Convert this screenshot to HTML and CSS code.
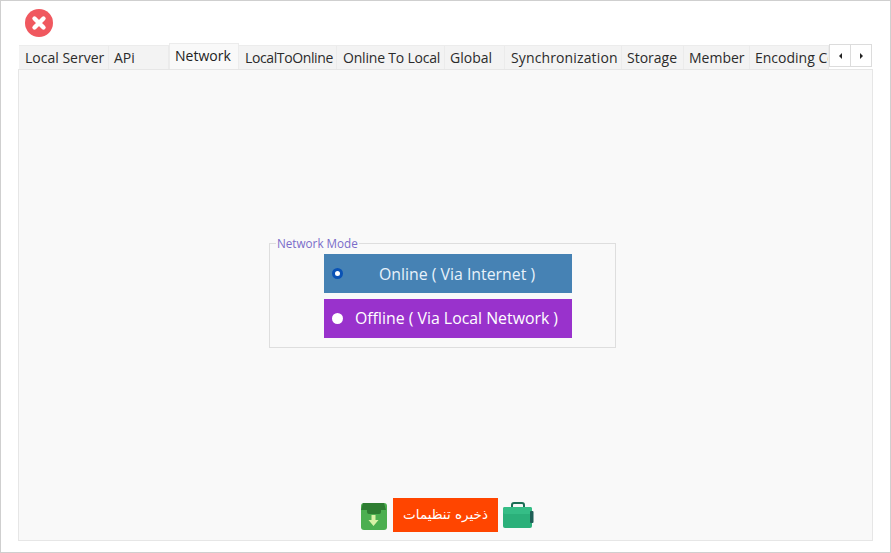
FILE: index.html
```html
<!DOCTYPE html>
<html lang="en">
<head>
<meta charset="utf-8">
<title>Settings</title>
<link rel="stylesheet" href="styles.css">
</head>
<body>
<div class="window">
  <div class="titlebar">
    <svg class="close-icon" width="28" height="28" viewBox="0 0 28 28">
      <circle cx="14" cy="14" r="14" fill="#f0585f"/>
      <path d="M9.500 9.500L18.500 18.500M18.500 9.500L9.500 18.500" stroke="#fff" stroke-width="4.400" stroke-linecap="round"/>
    </svg>
  </div>
  <div class="tabstrip">
    <div class="tab w-server">Local Server</div>
    <div class="tab w-api">APi</div>
    <div class="tab tab-active w-network">Network</div>
    <div class="tab w-l2o">LocalToOnline</div>
    <div class="tab w-o2l">Online To Local</div>
    <div class="tab w-global">Global</div>
    <div class="tab w-sync">Synchronization</div>
    <div class="tab w-storage">Storage</div>
    <div class="tab w-member">Member</div>
    <div class="tab w-encoding">Encoding Config</div>
    <div class="scroller">
      <div class="scroll-btn"><span class="tri tri-left"></span></div>
      <div class="scroll-btn"><span class="tri tri-right"></span></div>
    </div>
  </div>
  <div class="panel">
    <div class="center">
      <fieldset class="group">
        <legend class="group-title">Network Mode</legend>
        <div class="option option-online">
          <span class="radio radio-on"></span>
          <span class="option-label">Online ( Via Internet )</span>
        </div>
        <div class="option option-offline">
          <span class="radio radio-off"></span>
          <span class="option-label">Offline ( Via Local Network )</span>
        </div>
      </fieldset>
    </div>
    <div class="footer">
      <svg class="foot-icon" width="27" height="28" viewBox="0 0 27 28">
        <path d="M1 4q0-3 3-3h20q3 0 3 3v21q0 3-3 3H4q-3 0-3-3z" fill="#4caf50"/>
        <path d="M1 8L3 1h21l2 7h-5v2q0 2-2 2H9q-2 0-2-2V8z" fill="#2e7d32"/>
        <path d="M11.500 13h4v5h3l-5 6-5-6h3z" fill="#d9f2a6"/>
      </svg>
      <div class="save-btn" dir="rtl">ذخیره تنظیمات</div>
      <svg class="foot-icon" width="31" height="26" viewBox="0 0 31 26">
        <path d="M9 6V3q0-2 2-2h8q2 0 2 2v3" fill="none" stroke="#1b6e55" stroke-width="2"/>
        <rect x="0" y="5" width="29" height="21" rx="2" fill="#2bb07a"/>
        <rect x="0" y="5" width="29" height="7" rx="2" fill="#35bd86"/>
        <rect x="27" y="9" width="3.500" height="12" rx="1" fill="#1f5f57"/>
      </svg>
    </div>
  </div>
</div>
</body>
</html>
```
FILE: styles.css
```css
* { box-sizing: border-box; }
html, body { margin: 0; padding: 0; background: #fff; }
body { width: 891px; height: 553px; overflow: hidden; font-family: "Open Sans", "Noto Sans", sans-serif; }
.window {
  width: 891px; height: 553px;
  border: 1px solid #cfcfcf;
  padding: 0 17px 11px 17px;
  display: flex; flex-direction: column;
  background: #fff;
}
.titlebar { height: 44px; padding: 8px 0 0 7px; flex: none; }
.close-icon { display: block; }
.tabstrip { display: flex; height: 24px; flex: none; position: relative; z-index: 1; padding-left: 1px; }
.tab {
  height: 24px; flex: none;
  background: #f3f3f3;
  border-right: 1px solid #ebebeb;
  border-top: 1px solid #ececec;
  font-size: 14px; line-height: 24px; color: #2b2b2b;
  padding-left: 5px;
  white-space: nowrap; overflow: hidden;
}
.tab-active {
  background: #f9f9f9; height: 26px; margin-top: -2px;
  border: 1px solid #ececec; border-bottom: 0;
  line-height: 24px; color: #222;
}
.w-server { width: 90px; padding-left: 6px; }
.w-api { width: 60px; }
.w-network { width: 70px; }
.w-l2o { width: 98px; padding-left: 6px; letter-spacing: -0.38px; }
.w-o2l { width: 108px; padding-left: 6px; letter-spacing: -0.2px; }
.w-global { width: 60px; }
.w-sync { width: 117px; padding-left: 6px; letter-spacing: 0.13px; }
.w-storage { width: 62px; }
.w-member { width: 66px; }
.w-encoding { width: 79px; }
.scroller { display: flex; flex: none; margin-top: -1px; height: 23px; }
.scroll-btn {
  width: 22px; height: 23px; background: #fff;
  border: 1px solid #dcdcdc; margin-right: -1px;
  display: flex; align-items: center; justify-content: center;
}
.tri { width: 0; height: 0; border-top: 3px solid transparent; border-bottom: 3px solid transparent; }
.tri-left { border-right: 3px solid #222; }
.tri-right { border-left: 3px solid #222; }
.panel {
  flex: 1; min-height: 0;
  background: #f9f9f9;
  border: 1px solid #e6e6e6;
  display: flex; flex-direction: column; align-items: center;
}
.center { flex: 1; min-height: 0; width: 100%; padding: 166px 0 0 250px; }
.group {
  width: 347px; height: 112px; margin: 0; padding: 4px 0 0 54px;
  border: 1px solid #dedede;
  display: flex; flex-direction: column; gap: 6px;
}
.group-title {
  font-size: 11.7px; line-height: 14px; color: #7a6cc9;
  padding: 0 1px; margin-left: -48px;
}
.option {
  width: 248px; height: 39px; flex: none;
  display: flex; align-items: center; position: relative;
  color: #fff; font-size: 15.85px; line-height: 37px;
}
.option-online { background: #4682b4; }
.option-offline { background: #9932cc; }
.option-label { white-space: nowrap; }
.option-online .option-label { margin-left: 55px; padding-top: 2px; color: #e8f2fb; }
.option-offline .option-label { margin-left: 31px; }
.radio { position: absolute; left: 8px; top: 14px; width: 11px; height: 11px; border-radius: 50%; }
.radio-on { background: #fff; border: 3px solid #0a52b5; }
.radio-off { background: #fff; }
.footer { flex: none; height: 42px; padding: 0 0 0 3px; display: flex; align-items: flex-start; }
.save-btn {
  width: 105px; height: 34px; margin: 0 5px 0 6px;
  background: #ff4500; color: #fff;
  font-family: "DejaVu Sans", sans-serif; font-size: 13.5px; line-height: 33px; text-align: center;
  white-space: nowrap;
}
.foot-icon { display: block; margin-top: 4px; }
```
